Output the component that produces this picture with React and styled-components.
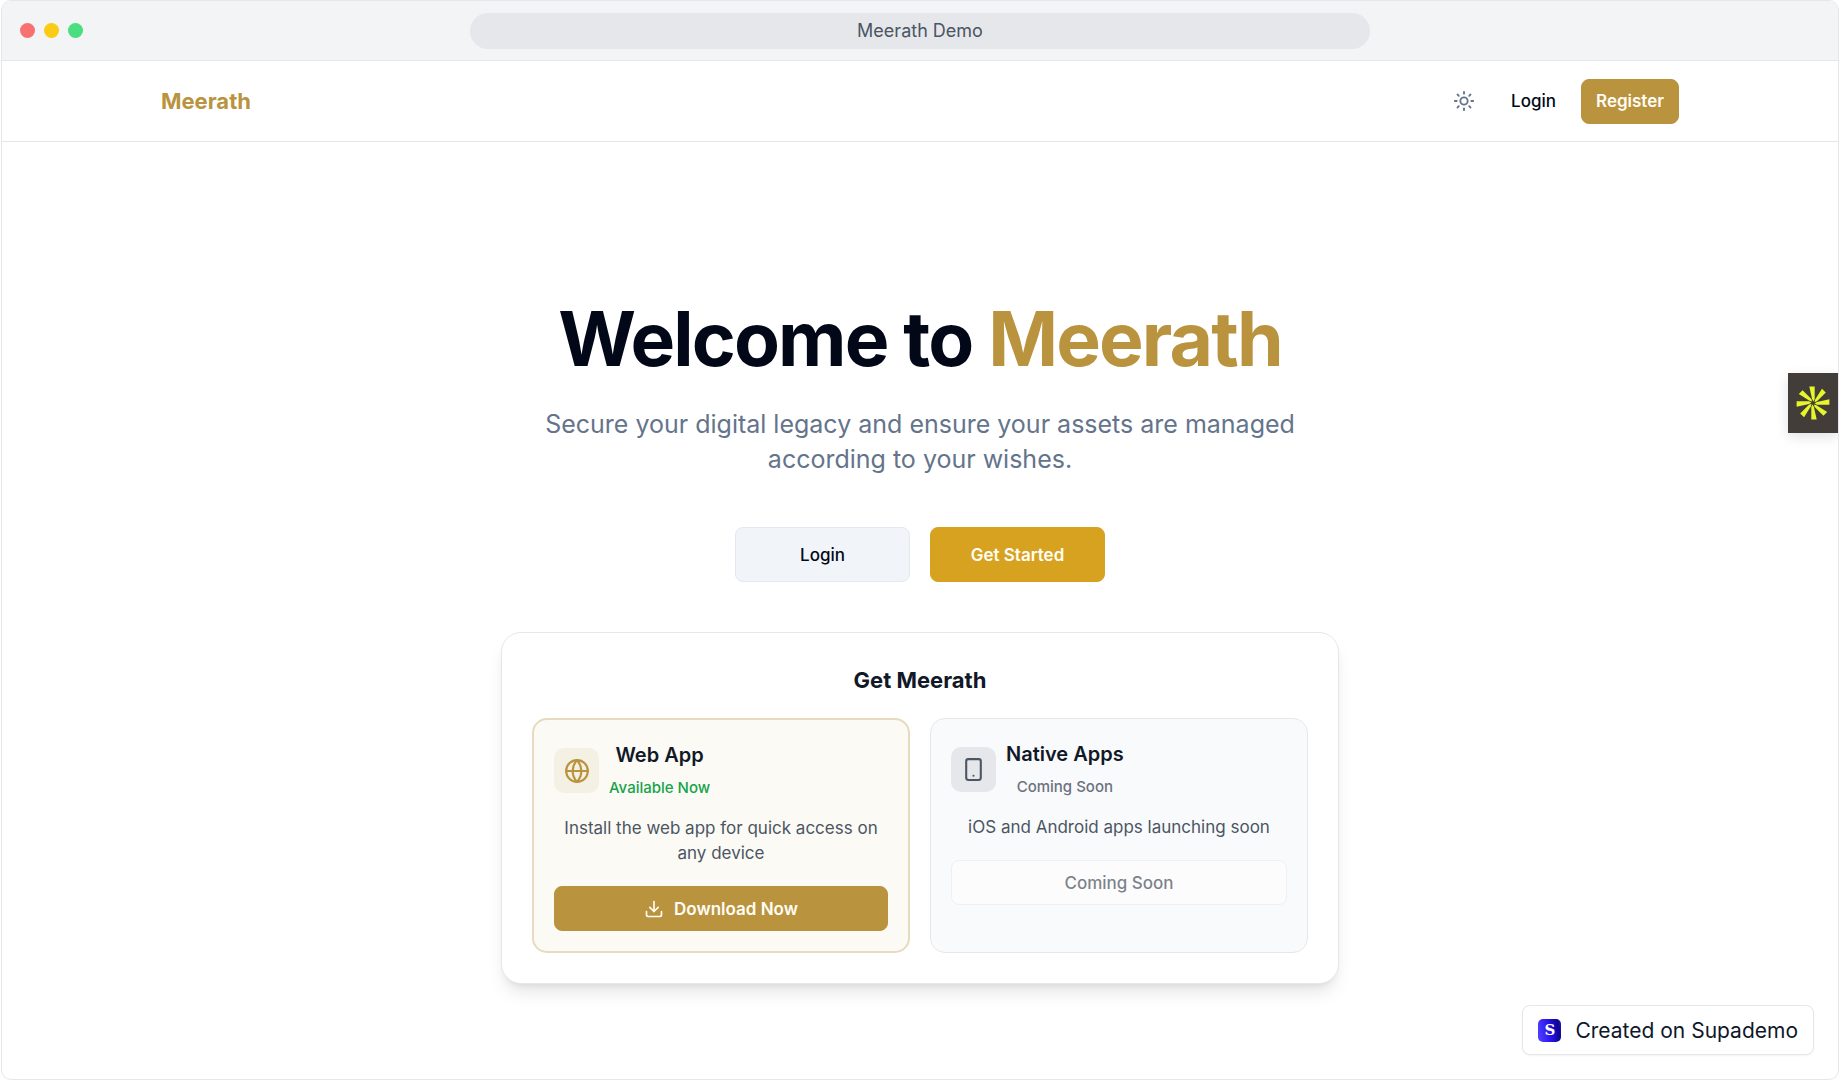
import React from "react";
import styled, { createGlobalStyle } from "styled-components";
import { Download, Globe, Smartphone, Sun } from "lucide-react";

const gold = "#ba933e";

const GlobalStyle = createGlobalStyle`
  *, *::before, *::after { box-sizing: border-box; }
  body {
    margin: 0;
    background: #ffffff;
    color: #020817;
    font-family: Inter, "Liberation Sans", sans-serif;
    font-size: 17px;
    -webkit-font-smoothing: antialiased;
  }
  h1, h2, h3, p { margin: 0; }
  button { font: inherit; cursor: pointer; }
`;

const Frame = styled.div`
  position: relative;
  display: flex;
  flex-direction: column;
  min-height: 100vh;
  margin: 0 1px;
  overflow: hidden;
  border: 1px solid #e5e7eb;
  border-radius: 10px;
`;

const TitleBar = styled.div`
  display: grid;
  grid-template-columns: 1fr minmax(0, 900px) 1fr;
  align-items: center;
  height: 60px;
  padding: 0 18px;
  background: #f3f4f6;
  border-bottom: 1px solid #e5e7eb;
`;

const Dots = styled.div`
  display: flex;
  gap: 9px;
`;

const Dot = styled.span`
  width: 15px;
  height: 15px;
  border-radius: 50%;
  background: ${(p) => p.$color};
`;

const Address = styled.div`
  height: 36px;
  border-radius: 18px;
  background: #e5e7eb;
  color: #4b5563;
  font-size: 18px;
  line-height: 36px;
  text-align: center;
`;

const Header = styled.header`
  border-bottom: 1px solid #e5e7eb;
`;

const HeaderInner = styled.div`
  display: flex;
  align-items: center;
  justify-content: space-between;
  max-width: 1518px;
  height: 80px;
  margin: 0 auto;
`;

const Brand = styled.a`
  color: ${gold};
  font-size: 22px;
  font-weight: 700;
  text-decoration: none;
`;

const Nav = styled.nav`
  display: flex;
  align-items: center;
  gap: 10px;
`;

const Button = styled.button`
  display: flex;
  align-items: center;
  justify-content: center;
  gap: 10px;
  height: 45px;
  padding: 0 14px;
  border: 1px solid transparent;
  border-radius: 8px;
  background: transparent;
  color: #020817;
  font-weight: 500;
`;

const IconButton = styled(Button)`
  width: 45px;
  padding: 0;
  color: #64748b;
`;

const GoldButton = styled(Button)`
  border-color: ${gold};
  background: ${gold};
  color: #fffdf5;
  font-weight: 600;
`;

const Main = styled.main`
  display: flex;
  flex: 1;
  flex-direction: column;
  align-items: center;
  padding: 159px 20px 80px;
  text-align: center;
`;

const Title = styled.h1`
  font-size: 75px;
  font-weight: 700;
  line-height: 76px;
  letter-spacing: -0.025em;
`;

const Accent = styled.span`
  color: ${gold};
`;

const Lead = styled.p`
  max-width: 800px;
  margin-top: 30px;
  color: #64748b;
  font-size: 25px;
  line-height: 35px;
`;

const Actions = styled.div`
  display: flex;
  gap: 20px;
  margin: 50px 0;
`;

const LargeButton = styled(Button)`
  width: 175px;
  height: 55px;
  border-color: #e2e8f0;
  background: #f1f5f9;
`;

const StartButton = styled(LargeButton)`
  border-color: #d7a220;
  background: #d7a220;
  color: #fffdf5;
  font-weight: 600;
`;

const Panel = styled.section`
  width: 100%;
  max-width: 838px;
  padding: 30px;
  border: 1px solid #e5e7eb;
  border-radius: 20px;
  background: #ffffff;
  box-shadow: 0 12px 18px -4px rgba(0, 0, 0, 0.1), 0 5px 8px -5px rgba(0, 0, 0, 0.1);
`;

const PanelTitle = styled.h2`
  margin-bottom: 20px;
  color: #111827;
  font-size: 22px;
  font-weight: 700;
  line-height: 35px;
`;

const Options = styled.div`
  display: grid;
  grid-template-columns: repeat(2, minmax(0, 1fr));
  gap: 20px;
`;

const Option = styled.article`
  padding: 20px;
  border: ${(p) => (p.$featured ? "2px solid #e7dabe" : "1px solid #e5e7eb")};
  border-radius: 15px;
  background: ${(p) => (p.$featured ? "#fbfaf5" : "#f9fafb")};
`;

const OptionHead = styled.div`
  display: flex;
  align-items: center;
  gap: 10px;
  margin-bottom: 15px;
`;

const IconTile = styled.span`
  display: flex;
  align-items: center;
  justify-content: center;
  width: 45px;
  height: 45px;
  border-radius: 10px;
  background: ${(p) => (p.$featured ? "#f5f0e4" : "#e5e7eb")};
  color: ${(p) => (p.$featured ? gold : "#4b5563")};
`;

const OptionTitle = styled.h3`
  color: #111827;
  font-size: 20px;
  font-weight: 600;
  line-height: 30px;
`;

const Status = styled.p`
  margin-top: 4px;
  color: ${(p) => (p.$available ? "#16a34a" : "#6b7280")};
  font-size: 15px;
  font-weight: 500;
  line-height: 27px;
`;

const Description = styled.p`
  margin-bottom: 20px;
  color: #4b5563;
  line-height: 25px;
`;

const WideGoldButton = styled(GoldButton)`
  width: 100%;
`;

const SoonButton = styled(Button)`
  width: 100%;
  border-color: #e2e8f0;
  background: #ffffff;
  opacity: 0.5;
`;

const SideTab = styled.button`
  position: absolute;
  top: 372px;
  right: 0;
  display: flex;
  align-items: center;
  justify-content: center;
  width: 50px;
  height: 60px;
  padding: 0;
  border: 0;
  background: #423d38;
  box-shadow: 0 4px 12px rgba(0, 0, 0, 0.12);
  cursor: pointer;
`;

const MadeWith = styled.a`
  position: absolute;
  right: 24px;
  bottom: 24px;
  display: flex;
  align-items: center;
  gap: 14px;
  height: 50px;
  padding: 0 15px;
  border: 1px solid #e5e7eb;
  border-radius: 8px;
  background: #ffffff;
  box-shadow: 0 1px 2px rgba(0, 0, 0, 0.05);
  color: #0f172a;
  font-size: 21px;
  text-decoration: none;
`;

const SupademoMark = styled.span`
  display: flex;
  align-items: center;
  justify-content: center;
  width: 23px;
  height: 23px;
  border-radius: 5px;
  background: linear-gradient(80deg, #4b3bff 10%, #2a14e8 50%, #0d0590 85%, #2a14c8);
  color: #ffffff;
  font-family: "DejaVu Serif", serif;
  font-size: 15px;
  font-weight: 700;
  line-height: 23px;
`;

function Burst() {
  return (
    <svg width="34" height="34" viewBox="-17 -17 34 34" fill="#e6f62a" aria-hidden="true">
      {[0, 45, 90, 135, 180, 225, 270, 315].map((angle) => (
        <path key={angle} d="M-3.7 -16.4 L1.7 -16.4 L1.7 -4 L0.4 -1.6 L-0.9 -4 Z" transform={`rotate(${angle})`} />
      ))}
    </svg>
  );
}

export default function App() {
  return (
    <>
      <GlobalStyle />
      <Frame>
        <TitleBar>
          <Dots>
            <Dot $color="#f87171" />
            <Dot $color="#facc15" />
            <Dot $color="#4ade80" />
          </Dots>
          <Address>Meerath Demo</Address>
        </TitleBar>
        <Header>
          <HeaderInner>
            <Brand href="#home">Meerath</Brand>
            <Nav>
              <IconButton type="button" aria-label="Toggle theme">
                <Sun size={22} strokeWidth={2} />
              </IconButton>
              <Button type="button">Login</Button>
              <GoldButton type="button">Register</GoldButton>
            </Nav>
          </HeaderInner>
        </Header>
        <Main>
          <Title>
            Welcome to <Accent>Meerath</Accent>
          </Title>
          <Lead>
            Secure your digital legacy and ensure your assets are managed according to your wishes.
          </Lead>
          <Actions>
            <LargeButton type="button">Login</LargeButton>
            <StartButton type="button">Get Started</StartButton>
          </Actions>
          <Panel>
            <PanelTitle>Get Meerath</PanelTitle>
            <Options>
              <Option $featured>
                <OptionHead>
                  <IconTile $featured>
                    <Globe size={26} strokeWidth={2} />
                  </IconTile>
                  <div>
                    <OptionTitle>Web App</OptionTitle>
                    <Status $available>Available Now</Status>
                  </div>
                </OptionHead>
                <Description>Install the web app for quick access on any device</Description>
                <WideGoldButton type="button">
                  <Download size={20} strokeWidth={2} />
                  Download Now
                </WideGoldButton>
              </Option>
              <Option>
                <OptionHead>
                  <IconTile>
                    <Smartphone size={25} strokeWidth={2} />
                  </IconTile>
                  <div>
                    <OptionTitle>Native Apps</OptionTitle>
                    <Status>Coming Soon</Status>
                  </div>
                </OptionHead>
                <Description>iOS and Android apps launching soon</Description>
                <SoonButton type="button" disabled>
                  Coming Soon
                </SoonButton>
              </Option>
            </Options>
          </Panel>
        </Main>
        <SideTab type="button" aria-label="Open assistant">
          <Burst />
        </SideTab>
        <MadeWith href="#supademo">
          <SupademoMark>S</SupademoMark>
          Created on Supademo
        </MadeWith>
      </Frame>
    </>
  );
}
